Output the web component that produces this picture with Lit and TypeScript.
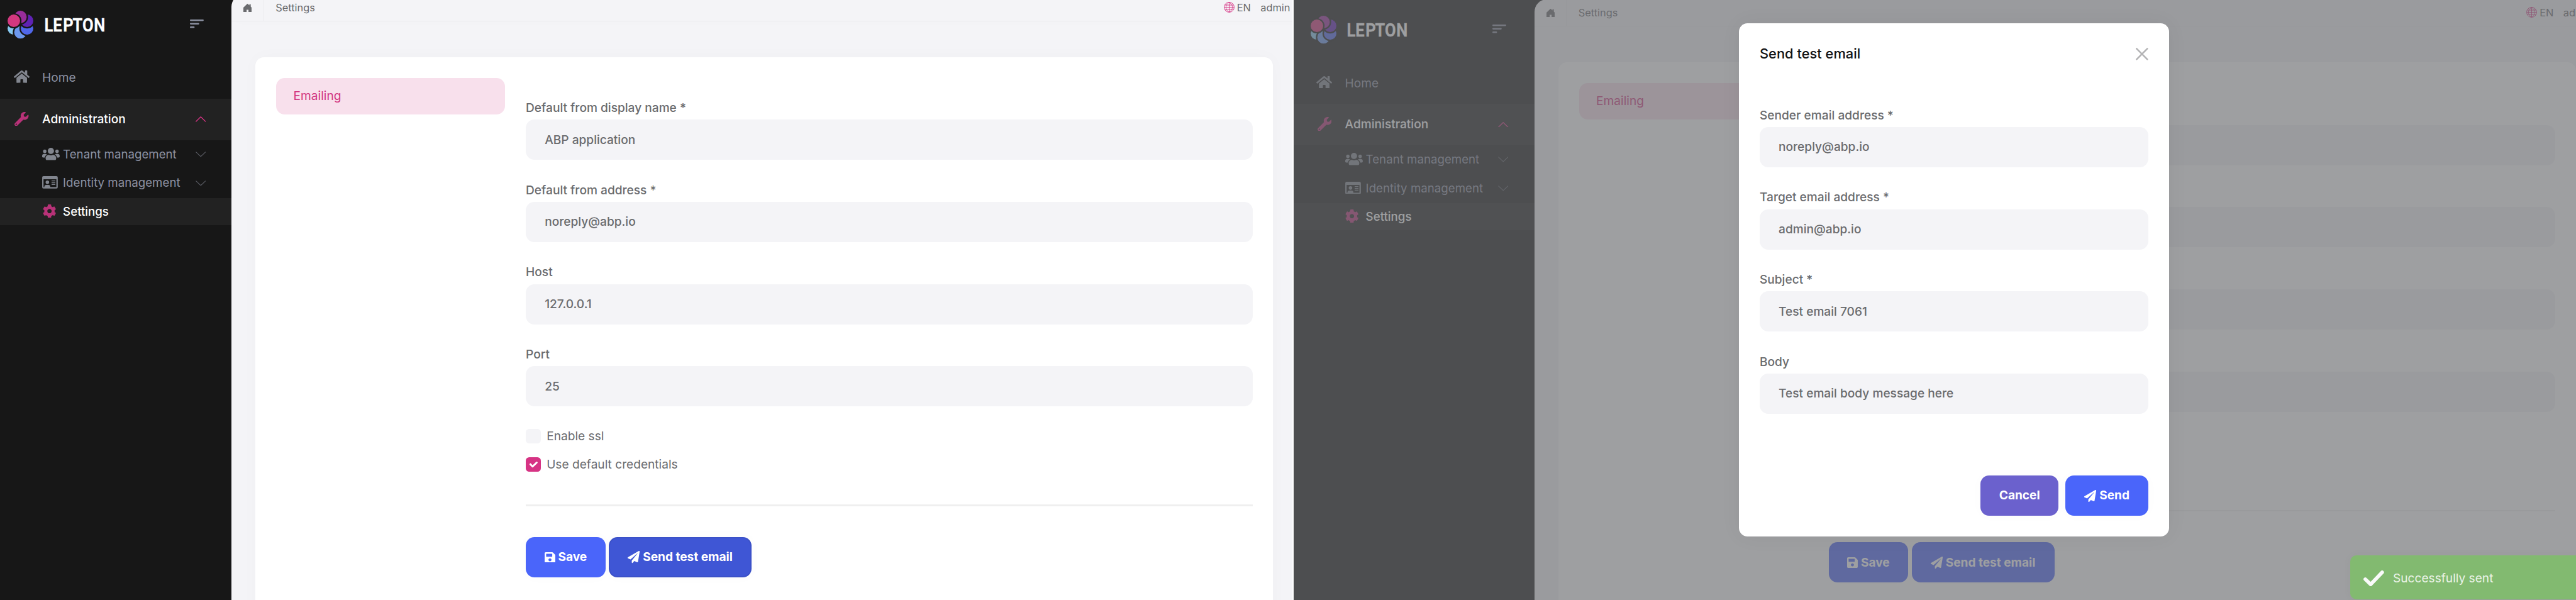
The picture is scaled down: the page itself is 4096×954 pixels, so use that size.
import { LitElement, html, svg, css, unsafeCSS } from "lit";
import { customElement, property } from "lit/decorators.js";
import { classMap } from "lit/directives/class-map.js";

const SCALE = 4096 / 7488;
const u = (n: number) => unsafeCSS(`${(n * SCALE).toFixed(3)}px`);

const icons: Record<string, { box: string; body: unknown }> = {
  home: {
    box: "0 32 576 448",
    body: svg`<path d="M280.37 148.26L96 300.11V464a16 16 0 0 0 16 16l112.06-.29a16 16 0 0 0 15.92-16V368a16 16 0 0 1 16-16h64a16 16 0 0 1 16 16v95.64a16 16 0 0 0 16 16.05L464 480a16 16 0 0 0 16-16V300L295.67 148.26a12.19 12.19 0 0 0-15.3 0zM571.6 251.47L488 182.56V44.05a12 12 0 0 0-12-12h-56a12 12 0 0 0-12 12v72.61L318.47 43a48 48 0 0 0-61 0L4.34 251.47a12 12 0 0 0-1.6 16.9l25.5 31A12 12 0 0 0 45.15 301l235.22-193.74a12.19 12.19 0 0 1 15.3 0L530.9 301a12 12 0 0 0 16.9-1.6l25.5-31a12 12 0 0 0-1.7-16.93z"/>`,
  },
  wrench: {
    box: "0 0 512 512",
    body: svg`<path d="M507.73 109.1c-2.24-9.03-13.54-12.09-20.12-5.51l-74.36 74.36-67.88-11.31-11.31-67.88 74.36-74.36c6.62-6.62 3.43-17.9-5.66-20.16-47.38-11.74-99.55.91-136.58 37.93-39.64 39.64-50.55 97.1-34.05 147.2L18.74 402.76c-24.99 24.99-24.99 65.51 0 90.5 24.99 24.99 65.51 24.99 90.5 0l213.21-213.21c50.12 16.71 107.47 5.68 147.37-34.22 37.07-37.07 49.7-89.32 37.91-136.73zM64 472c-13.25 0-24-10.75-24-24 0-13.26 10.75-24 24-24s24 10.74 24 24c0 13.25-10.75 24-24 24z"/>`,
  },
  cog: {
    box: "8 8 496 496",
    body: svg`<path d="M487.4 315.7l-42.6-24.6c4.3-23.2 4.3-47 0-70.2l42.6-24.6c4.9-2.8 7.1-8.6 5.5-14-11.1-35.6-30-67.8-54.7-94.6-3.8-4.1-10-5.1-14.8-2.3L380.8 110c-17.9-15.4-38.5-27.3-60.8-35.1V25.8c0-5.6-3.9-10.5-9.4-11.7-36.7-8.2-74.3-7.8-109.2 0-5.5 1.2-9.4 6.1-9.4 11.7V75c-22.2 7.9-42.8 19.8-60.8 35.1L88.7 85.5c-4.9-2.8-11-1.9-14.8 2.3-24.7 26.7-43.6 58.9-54.7 94.6-1.7 5.4.6 11.2 5.5 14L67.3 221c-4.3 23.2-4.3 47 0 70.2l-42.6 24.6c-4.9 2.8-7.1 8.6-5.5 14 11.1 35.6 30 67.8 54.7 94.6 3.8 4.1 10 5.1 14.8 2.3l42.6-24.6c17.9 15.4 38.5 27.3 60.8 35.1v49.2c0 5.6 3.9 10.5 9.4 11.7 36.7 8.2 74.3 7.8 109.2 0 5.5-1.2 9.4-6.1 9.4-11.7v-49.2c22.2-7.9 42.8-19.8 60.8-35.1l42.6 24.6c4.9 2.8 11 1.9 14.8-2.3 24.7-26.7 43.6-58.9 54.7-94.6 1.5-5.5-.7-11.3-5.6-14.1zM256 336c-44.1 0-80-35.9-80-80s35.9-80 80-80 80 35.9 80 80-35.9 80-80 80z"/>`,
  },
  users: {
    box: "0 32 640 448",
    body: svg`<path d="M96 224c35.3 0 64-28.7 64-64s-28.7-64-64-64-64 28.7-64 64 28.7 64 64 64zm448 0c35.3 0 64-28.7 64-64s-28.7-64-64-64-64 28.7-64 64 28.7 64 64 64zm32 32h-64c-17.6 0-33.5 7.1-45.1 18.6 40.3 22.1 68.9 62 75.1 109.4h66c17.7 0 32-14.3 32-32v-32c0-35.3-28.7-64-64-64zm-256 0c61.9 0 112-50.1 112-112S381.9 32 320 32 208 82.1 208 144s50.1 112 112 112zm76.8 32h-8.3c-20.8 10-43.9 16-68.5 16s-47.6-6-68.5-16h-8.3C179.6 288 128 339.6 128 403.2V432c0 26.5 21.5 48 48 48h288c26.5 0 48-21.5 48-48v-28.8c0-63.6-51.6-115.2-115.2-115.2zm-223.7-13.4C161.5 263.1 145.6 256 128 256H64c-35.3 0-64 28.7-64 64v32c0 17.7 14.3 32 32 32h65.9c6.3-47.4 34.9-87.3 75.2-109.4z"/>`,
  },
  idCard: {
    box: "0 0 136 108",
    body: svg`<path fill-rule="evenodd" d="M12 0H124A12 12 0 0 1 136 12V96A12 12 0 0 1 124 108H12A12 12 0 0 1 0 96V12A12 12 0 0 1 12 0ZM12 27V96H19V94A17 17 0 0 1 36 77H54A17 17 0 0 1 71 94V96H124V27Z"/><circle cx="45.5" cy="54" r="15.5"/><path d="M82 38.5h33v7H82zM82 54.500h33v7H82zM82 70h33v7H82z"/>`,
  },
  save: {
    box: "0 32 448 448",
    body: svg`<path d="M433.941 129.941l-83.882-83.882A48 48 0 0 0 316.118 32H48C21.49 32 0 53.49 0 80v352c0 26.51 21.49 48 48 48h352c26.51 0 48-21.49 48-48V163.882a48 48 0 0 0-14.059-33.941zM224 416c-35.346 0-64-28.654-64-64 0-35.346 28.654-64 64-64s64 28.654 64 64c0 35.346-28.654 64-64 64zm96-304.52V212c0 6.627-5.373 12-12 12H76c-6.627 0-12-5.373-12-12V108c0-6.627 5.373-12 12-12h228.52c3.183 0 6.235 1.264 8.485 3.515l3.48 3.48A11.996 11.996 0 0 1 320 111.48z"/>`,
  },
  plane: {
    box: "0 0 512 512",
    body: svg`<path d="M476 3.2L12.5 270.6c-18.1 10.4-15.8 35.6 2.2 43.2L121 358.4l287.3-253.2c5.5-4.9 13.3 2.6 8.6 8.3L176 407v80.5c0 23.6 28.5 32.9 42.5 15.8L282 426l124.6 52.2c14.2 6 30.400-2.9 33-18.2l72-432C515 7.8 493.3-6.800 476 3.200z"/>`,
  },
  house: {
    box: "0 0 72 75",
    body: svg`<path d="M33 1.500Q36 -1 39 1.500L52 13.500V6Q52 4 54 4H62Q64 4 64 6V24.500L70.500 31Q72 32.500 72 34.500V73Q72 75 70 75H46Q44.500 75 44.500 73.500V52H28V73.500Q28 75 26.500 75H2Q0 75 0 73V34.500Q0 32.500 1.500 31Z"/>`,
  },
  globe: {
    box: "0 0 32 32",
    body: svg`<g fill="none" stroke="currentColor" stroke-width="1.700"><circle cx="16" cy="16" r="15"/><path d="M16 1V31M1 16H31M3 9.500H29M3 22.500H29M16 1C8.500 6 6.500 11 6.500 16S8.500 26 16 31C23.500 26 25.500 21 25.500 16S23.500 6 16 1"/></g>`,
  },
  up: {
    box: "0 0 30 16",
    body: svg`<path d="M1.500 14.500L15 1.500L28.500 14.500" fill="none" stroke="currentColor" stroke-width="2.400" stroke-linecap="round" stroke-linejoin="round"/>`,
  },
  down: {
    box: "0 0 30 16",
    body: svg`<path d="M1.500 1.500L15 14.500L28.500 1.500" fill="none" stroke="currentColor" stroke-width="2" stroke-linecap="round" stroke-linejoin="round"/>`,
  },
  menu: {
    box: "0 0 40 25",
    body: svg`<rect width="40" height="4.500" rx="2"/><rect y="10" width="27" height="4.500" rx="2"/><rect y="20.200" width="13.500" height="4.500" rx="2"/>`,
  },
  close: {
    box: "0 0 36 36",
    body: svg`<path d="M2.500 2.500L33.500 33.500M33.500 2.500L2.500 33.500" fill="none" stroke="currentColor" stroke-width="4.500" stroke-linecap="round"/>`,
  },
  tick: {
    box: "0 0 43 43",
    body: svg`<path d="M13.500 20.500L19.800 27L31.800 15.500" fill="none" stroke="currentColor" stroke-width="5.500" stroke-linecap="round" stroke-linejoin="round"/>`,
  },
  done: {
    box: "0 0 60 46",
    body: svg`<path d="M5.500 25.500L21 40.500L54.500 5.500" fill="none" stroke="currentColor" stroke-width="10.500" stroke-linecap="round"/>`,
  },
};

const icon = (name: string) =>
  html`<svg class="icon i-${name}" viewBox=${icons[name].box} fill="currentColor">${icons[name].body}</svg>`;

const shared = css`
  * {
    box-sizing: border-box;
  }
  :host {
    font-family: Inter, "Liberation Sans", sans-serif;
    font-size: ${u(35)};
    line-height: ${u(50)};
    color: #6a6b6e;
    white-space: nowrap;
  }
  .icon {
    display: block;
    flex: none;
  }
  .i-home { width: ${u(46)}; height: ${u(36)}; margin-bottom: ${u(7)}; }
  .i-wrench { width: ${u(41)}; height: ${u(41)}; margin-bottom: ${u(4)}; }
  .i-cog { width: ${u(39)}; height: ${u(39)}; margin-bottom: ${u(3)}; }
  .i-users { width: ${u(51)}; height: ${u(36)}; margin-bottom: ${u(2)}; }
  .i-idCard { width: ${u(45.500)}; height: ${u(36)}; margin-bottom: ${u(3)}; }
  .i-save { width: ${u(31)}; height: ${u(31)}; }
  .i-plane { width: ${u(35)}; height: ${u(35)}; }
  .i-house { width: ${u(24)}; height: ${u(25)}; }
  .i-globe { width: ${u(31)}; height: ${u(31)}; }
  .i-up, .i-down { width: ${u(30)}; height: ${u(16)}; }
  .i-menu { width: ${u(40)}; height: ${u(25)}; }
  .i-close { width: ${u(36)}; height: ${u(36)}; }
  .i-tick { width: ${u(43)}; height: ${u(43)}; }
  .i-done { width: ${u(60)}; height: ${u(46)}; }

  .field {
    display: flex;
    flex-direction: column;
    gap: ${u(9)};
    font-weight: 500;
  }
  .input {
    height: ${u(117)};
    padding: 0 ${u(55)};
    border-radius: ${u(25)};
    background: #f4f4f7;
    display: flex;
    align-items: center;
  }
  .btn {
    display: flex;
    align-items: center;
    justify-content: center;
    gap: ${u(8.500)};
    height: ${u(116)};
    border-radius: ${u(25)};
    color: #fff;
    font-weight: 700;
    letter-spacing: -0.002em;
    background: #4a65fa;
    box-shadow: 0 0 ${u(40)} rgba(0, 0, 0, 0.02);
  }
`;

const field = (label: string, value: string) =>
  html`<div class="field"><label>${label}</label><div class="input">${value}</div></div>`;

@customElement("lepton-sidebar")
class LeptonSidebar extends LitElement {
  static styles = [
    shared,
    css`
      :host {
        display: block;
        background: #171717;
        color: #8c91a2;
        font-size: ${u(35)};
      }
      .brand {
        display: flex;
        align-items: center;
        height: ${u(174)};
        margin-bottom: ${u(8)};
        padding: 0 ${u(81)} 0 ${u(49.500)};
      }
      .logo { width: ${u(75)}; height: ${u(81)}; display: block; }
      .word { width: ${u(200)}; height: ${u(68)}; margin-left: ${u(30)}; display: block; }
      .word text { font: 600 53px Roboto, sans-serif; fill: #fff; stroke: #fff; stroke-width: 0.800; stroke-linejoin: round; }
      .toggle { margin: 0 0 ${u(5)} auto; }
      .item {
        display: flex;
        align-items: center;
        height: ${u(120)};
        padding-right: ${u(75)};
      }
      .lead {
        width: ${u(149.500)};
        padding-left: ${u(30)};
        display: flex;
        justify-content: center;
        color: #82868f;
      }
      .chev { margin-left: auto; color: #5c5e66; }
      .on { background: #222; color: #fff; font-weight: 450; }
      .on .lead, .on .mark { color: #b83278; }
      .on .chev { color: #d63384; }
      .sub {
        display: grid;
        grid-auto-rows: ${u(80)};
        gap: ${u(3)};
        padding-top: ${u(2)};
        font-size: ${u(34.200)};
      }
      .sub .item { height: auto; padding-left: ${u(150)}; }
      .mark { width: ${u(60)}; color: #82868f; }
      .mark .i-cog { margin-left: ${u(1)}; }
    `,
  ];

  render() {
    return html`
      <div class="brand">
        <svg class="logo" viewBox="69 66 222 240" stroke="#171717" stroke-width="12">
          <circle cx="123" cy="219" r="54" stroke="none" fill="#86c8f0" />
          ${[
            [180, 252, "#6c98ee"],
            [237, 219, "#5067ea"],
            [237, 153, "#5f22b4"],
            [180, 120, "#982d9b"],
            [123, 153, "#d3387f"],
          ].map(([x, y, c]) => svg`<circle cx=${x} cy=${y} r="60" fill=${c} />`)}
        </svg>
        <svg class="word" viewBox="0 -10 200 68">
          <g transform="scale(.88 1)"><text x="1.200 29.500 63 94.500 126.500 164.500" y="43">LEPTON</text></g>
        </svg>
        <div class="toggle">${icon("menu")}</div>
      </div>
      <div class="item"><span class="lead">${icon("home")}</span>Home</div>
      <div class="item on">
        <span class="lead">${icon("wrench")}</span>Administration<span class="chev">${icon("up")}</span>
      </div>
      <div class="sub">
        <div class="item"><span class="mark">${icon("users")}</span>Tenant management<span class="chev">${icon("down")}</span></div>
        <div class="item"><span class="mark">${icon("idCard")}</span>Identity management<span class="chev">${icon("down")}</span></div>
        <div class="item on"><span class="mark">${icon("cog")}</span>Settings</div>
      </div>
    `;
  }
}

@customElement("settings-page")
class SettingsPage extends LitElement {
  @property({ type: Boolean }) pressed = false;

  static styles = [
    shared,
    css`
      :host {
        display: grid;
        grid-template-columns: ${u(700)} ${u(3120)};
        height: ${u(1760)};
        background: #171717;
      }
      .content {
        background: #f4f4f7;
        border-top-left-radius: ${u(36)};
        margin-top: ${u(-2)};
        padding-top: ${u(2)};
      }
      .topbar {
        display: flex;
        align-items: center;
        height: ${u(77)};
        border-bottom: ${u(2)} solid #ebebee;
        font-size: ${u(30)};
        box-shadow: 0 ${u(10)} ${u(40)} rgba(0, 0, 0, 0.008);
      }
      .crumb-home {
        height: 100%;
        width: ${u(94)};
        padding-left: ${u(35)};
        display: flex;
        align-items: center;
        border-right: ${u(2)} solid #ebebee;
      }
      .crumb { margin-left: ${u(34)}; }
      .lang { margin-left: auto; display: flex; align-items: center; gap: ${u(7)}; }
      .lang .icon { color: #d63384; margin-top: ${u(-4)}; }
      .user { width: ${u(100)}; margin: 0 ${u(29)} 0 ${u(28)}; }
      .card {
        display: grid;
        grid-template-columns: ${u(665.500)} ${u(2113)};
        gap: ${u(60)};
        width: ${u(2958)};
        height: ${u(1700)};
        margin: ${u(104)} 0 0 ${u(70)};
        padding: ${u(60)};
        border-radius: ${u(25)};
        background: #fff;
        box-shadow: 0 0 ${u(50)} rgba(0, 0, 0, 0.025);
      }
      .tab {
        height: ${u(106)};
        padding-left: ${u(50)};
        display: flex;
        align-items: center;
        border-radius: ${u(25)};
        background: #f8e0ec;
        color: #d2357f;
      }
      .form { padding-top: ${u(63)}; }
      .fields { display: grid; gap: ${u(63)}; }
      .checks { margin-top: ${u(45)}; display: grid; grid-auto-rows: ${u(82)}; }
      .check { display: flex; align-items: center; gap: ${u(17.500)}; }
      .box { width: ${u(43)}; height: ${u(43)}; border-radius: ${u(10)}; background: #f4f4f7; }
      .ticked { background: #d63384; color: #fff; }
      .rule { height: ${u(5)}; margin: ${u(76)} 0 ${u(90)}; background: #efefef; }
      .actions { display: flex; gap: ${u(9.500)}; }
      .save { width: ${u(232)}; }
      .test { width: ${u(415)}; }
      .pressed { background: #3f56d5; border: ${u(5)} solid #3b51c8; }
    `,
  ];

  render() {
    return html`
      <lepton-sidebar></lepton-sidebar>
      <div class="content">
        <div class="topbar">
          <div class="crumb-home">${icon("house")}</div>
          <span class="crumb">Settings</span>
          <span class="lang">${icon("globe")}EN</span>
          <span class="user">admin</span>
        </div>
        <div class="card">
          <div><div class="tab">Emailing</div></div>
          <div class="form">
            <div class="fields">
              ${field("Default from display name *", "ABP application")}
              ${field("Default from address *", "noreply@abp.io")}
              ${field("Host", "127.0.0.1")}
              ${field("Port", "25")}
            </div>
            <div class="checks">
              <div class="check"><span class="box"></span>Enable ssl</div>
              <div class="check"><span class="box ticked">${icon("tick")}</span>Use default credentials</div>
            </div>
            <div class="rule"></div>
            <div class="actions">
              <div class="btn save">${icon("save")}Save</div>
              <div class=${classMap({ btn: true, test: true, pressed: this.pressed })}>${icon("plane")}Send test email</div>
            </div>
          </div>
        </div>
      </div>
    `;
  }
}

@customElement("test-email-dialog")
class TestEmailDialog extends LitElement {
  static styles = [
    shared,
    css`
      :host {
        display: block;
        box-sizing: border-box;
        width: ${u(1250)};
        height: ${u(1492)};
        padding: ${u(60)};
        border-radius: ${u(25)};
        background: #fff;
        box-shadow: 0 0 ${u(60)} rgba(0, 0, 0, 0.05);
      }
      .head {
        display: flex;
        justify-content: space-between;
        align-items: center;
        height: ${u(60)};
        font-size: ${u(40)};
        font-weight: 500;
        color: #111214;
      }
      .head .icon { color: #b2b2b4; }
      .fields { display: grid; gap: ${u(63)}; margin-top: ${u(123)}; }
      .foot { display: flex; justify-content: flex-end; gap: ${u(20)}; margin-top: ${u(180)}; }
      .cancel { width: ${u(227)}; background: #6b61cd; }
      .send { width: ${u(241)}; }
    `,
  ];

  render() {
    return html`
      <div class="head">Send test email${icon("close")}</div>
      <div class="fields">
        ${field("Sender email address *", "noreply@abp.io")}
        ${field("Target email address *", "admin@abp.io")}
        ${field("Subject *", "Test email 7061")}
        ${field("Body", "Test email body message here")}
      </div>
      <div class="foot">
        <div class="btn cancel">Cancel</div>
        <div class="btn send">${icon("plane")}Send</div>
      </div>
    `;
  }
}

@customElement("app-root")
class AppRoot extends LitElement {
  static styles = [
    shared,
    css`
      :host {
        display: grid;
        grid-template-columns: ${u(3757)} ${u(3728)};
        column-gap: ${u(3)};
        width: 4096px;
        height: 954px;
        overflow: hidden;
        background: #fff;
      }
      .pane { position: relative; overflow: hidden; height: 954px; }
      .before settings-page { margin: ${u(-15)} 0 0 ${u(-27)}; }
      .backdrop {
        position: absolute;
        inset: 0;
        padding: ${u(67)} 0 0 ${u(1295)};
        background: rgba(106, 108, 110, 0.65);
      }
      .toast {
        position: absolute;
        left: ${u(3072)};
        bottom: ${u(1)};
        width: ${u(750)};
        height: ${u(128)};
        padding: ${u(4)} 0 0 ${u(38)};
        display: flex;
        align-items: center;
        gap: ${u(26)};
        border-radius: ${u(18)};
        background: #82ba70;
        color: #eaf3e8;
        box-shadow: 0 0 ${u(30)} rgba(0, 0, 0, 0.03);
      }
      .toast .icon { color: #fafafa; }
    `,
  ];

  render() {
    return html`
      <div class="pane before"><settings-page pressed></settings-page></div>
      <div class="pane">
        <settings-page></settings-page>
        <div class="backdrop"><test-email-dialog></test-email-dialog></div>
        <div class="toast">${icon("done")}Successfully sent</div>
      </div>
    `;
  }
}
